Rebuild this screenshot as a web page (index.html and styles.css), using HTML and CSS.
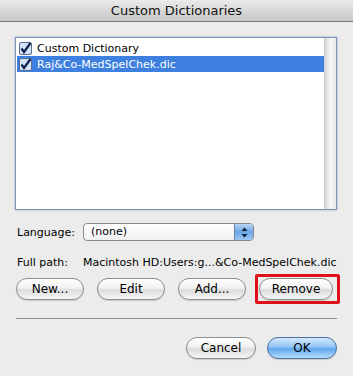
FILE: index.html
```html
<!DOCTYPE html>
<html lang="en">
<head>
    <meta charset="UTF-8">
    <title>Custom Dictionaries</title>
    <link rel="stylesheet" href="styles.css">
</head>
<body>
    <div class="window">
        <div class="titlebar">Custom Dictionaries</div>
        <div class="content">
            <div class="list">
                <div class="rows">
                    <div class="row">
                        <svg class="check" width="13" height="13" viewBox="0 0 13 13">
                            <rect x="0.5" y="0.5" width="12" height="12" rx="1.5" fill="#d3e2f4" stroke="#5a6d8c"/>
                            <path d="M2.5 6.5 L5 10 L11.5 1" fill="none" stroke="#0f2350" stroke-width="2.2"/>
                        </svg>
                        <span>Custom Dictionary</span>
                    </div>
                    <div class="row selected">
                        <svg class="check" width="13" height="13" viewBox="0 0 13 13">
                            <rect x="0.5" y="0.5" width="12" height="12" rx="1.5" fill="#d3e2f4" stroke="#5a6d8c"/>
                            <path d="M2.5 6.5 L5 10 L11.5 1" fill="none" stroke="#0f2350" stroke-width="2.2"/>
                        </svg>
                        <span>Raj&amp;Co-MedSpelChek.dic</span>
                    </div>
                </div>
                <div class="scrolltrack"></div>
            </div>

            <div class="field language">
                <span class="label">Language:</span>
                <div class="popup">
                    <span class="popup-text">(none)</span>
                    <span class="popup-arrows">
                        <svg width="7" height="11" viewBox="0 0 7 11">
                            <path d="M3.5 0.5 L6.5 4 L0.5 4 Z" fill="#10203a"/>
                            <path d="M3.5 10.5 L6.5 7 L0.5 7 Z" fill="#10203a"/>
                        </svg>
                    </span>
                </div>
            </div>

            <div class="field path">
                <span class="label">Full path:</span>
                <span class="value">Macintosh HD:Users:g...&amp;Co-MedSpelChek.dic</span>
            </div>

            <div class="buttons">
                <button class="btn">New...</button>
                <button class="btn">Edit</button>
                <button class="btn">Add...</button>
                <span class="marked"><button class="btn wide">Remove</button></span>
            </div>

            <div class="separator"></div>

            <div class="footer">
                <button class="btn">Cancel</button>
                <button class="btn default">OK</button>
            </div>
        </div>
    </div>
</body>
</html>
```

FILE: styles.css
```css
body {
    margin: 0;
    background: #ececec;
    font-family: "DejaVu Sans", sans-serif;
    font-size: 11px;
    color: #000;
}
.window {
    width: 353px;
    height: 376px;
    background: #ececec;
}
.titlebar {
    height: 22px;
    line-height: 22px;
    box-sizing: border-box;
    text-align: center;
    font-size: 13px;
    background: linear-gradient(#ebebeb, #c6c6c6);
    border-bottom: 1px solid #7a7a7a;
    color: #111;
}
.content {
    padding: 15px 16px 0 15px;
}
.list {
    height: 173px;
    box-sizing: border-box;
    border: 1px solid #7d93b4;
    box-shadow: 0 0 2px rgba(90, 130, 190, 0.6);
    background: #fff;
    display: flex;
    padding: 2px 1px 1px 1px;
}
.rows {
    flex: 1;
}
.row {
    height: 16px;
    display: flex;
    align-items: center;
    gap: 5px;
    padding-left: 2px;
}
.row.selected {
    background: #3d80df;
    color: #fff;
}
.check {
    flex: none;
}
.scrolltrack {
    width: 11px;
    margin: -2px -1px -1px 0;
    background: linear-gradient(90deg, #d8d8d8, #f6f6f6 50%, #e8e8e8);
    border-left: 1px solid #cfcfcf;
}
.field {
    display: flex;
    align-items: center;
    white-space: nowrap;
}
.label {
    width: 66px;
    flex: none;
    padding-left: 2px;
}
.language {
    margin-top: 13px;
    height: 18px;
}
.popup {
    width: 171px;
    height: 18px;
    box-sizing: border-box;
    border: 1px solid #8a8a8a;
    border-radius: 4px;
    background: linear-gradient(#fff, #f0f0f0);
    display: flex;
    overflow: hidden;
}
.popup-text {
    flex: 1;
    padding-left: 7px;
    line-height: 16px;
}
.popup-arrows {
    width: 18px;
    display: flex;
    align-items: center;
    justify-content: center;
    background: linear-gradient(#b9d6f5, #6aa6e6 50%, #9cc8f3);
    border-left: 1px solid #6b86ad;
}
.path {
    margin-top: 14px;
    height: 14px;
}
.buttons {
    margin-top: 9px;
    display: flex;
    gap: 13px;
    padding-left: 1px;
}
.btn {
    height: 22px;
    width: 68px;
    padding: 0;
    font-family: "DejaVu Sans", sans-serif;
    font-size: 12px;
    color: #000;
    border: 1px solid #8d8d8d;
    border-radius: 11px;
    background: linear-gradient(#ffffff, #f1f1f1 45%, #dcdcdc 55%, #f6f6f6);
    box-shadow: 0 1px 1px rgba(0, 0, 0, 0.15);
}
.btn.wide {
    width: 74px;
}
.marked {
    position: relative;
    display: flex;
}
.marked::after {
    content: "";
    position: absolute;
    top: -4px;
    left: -4px;
    right: -7px;
    bottom: -4px;
    border: 3px solid #e0101a;
    border-radius: 2px;
}
.separator {
    margin-top: 18px;
    height: 1px;
    margin-left: 1px;
    background: #8e8e8e;
}
.footer {
    margin-top: 18px;
    display: flex;
    justify-content: flex-end;
    gap: 11px;
}
.footer .btn {
    width: 70px;
}
.btn.default {
    border-color: #4a6fa6;
    background: linear-gradient(#d5eafd, #8fc4f4 45%, #62a6ee 55%, #b6defc);
}
```
